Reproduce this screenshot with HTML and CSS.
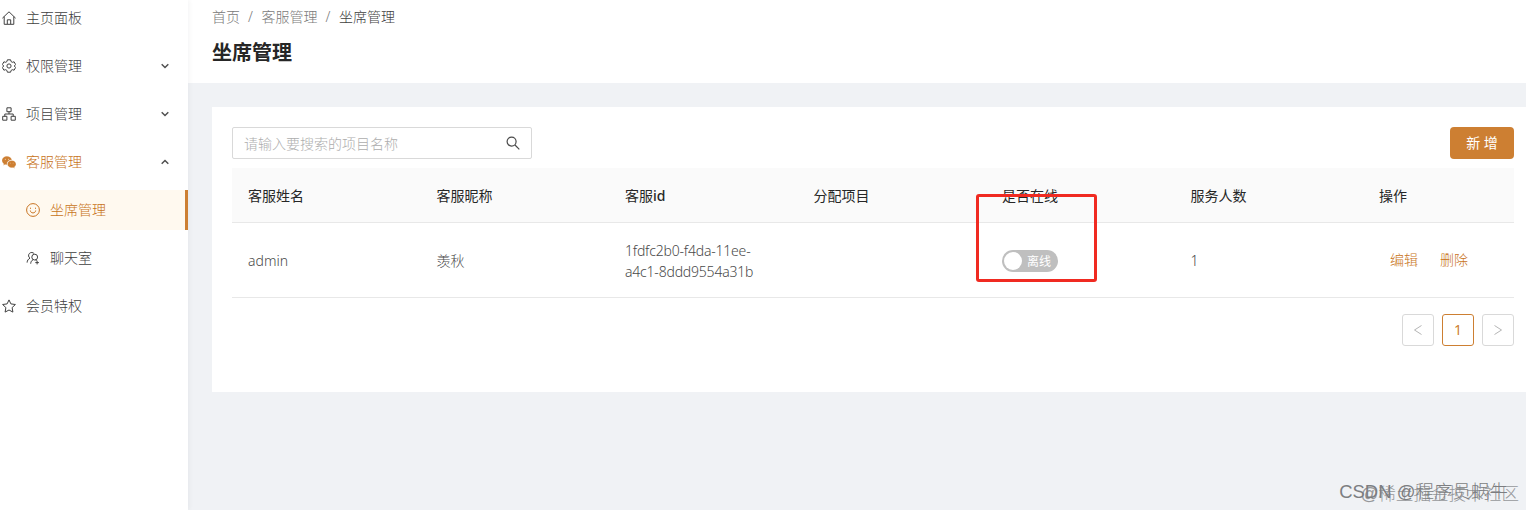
FILE: index.html
```html
<!DOCTYPE html>
<html lang="zh-CN">
<head>
    <meta charset="UTF-8">
    <meta name="viewport" content="width=device-width, initial-scale=1.0">
    <title>坐席管理</title>
    <link rel="stylesheet" href="styles.css">
</head>
<body>
    <div class="layout">
        <aside class="sidebar">
            <ul class="menu">
                <li class="menu-item">
                    <svg class="icon" viewBox="0 0 14 14"><path d="M.4 7.200 7 .8l6.600 6.400M2.200 5.600v7.700h9.600V5.600M5.300 13V8.800h3.400V13"/></svg>
                    <span>主页面板</span>
                </li>
                <li class="menu-item">
                    <svg class="icon" viewBox="0 0 14 14"><path d="M5.400.8h3.200l.5 1.800 1.200.7 1.800-.5 1.500 2.700L12.300 7l1.300 1.500-1.500 2.700-1.800-.5-1.200.7-.5 1.800H5.400l-.5-1.800-1.200-.7-1.800.5L.4 8.500 1.700 7 .4 5.500l1.500-2.700 1.800.5 1.200-.7z"/><circle cx="7" cy="7" r="2.100"/></svg>
                    <span>权限管理</span>
                    <svg class="arrow" viewBox="0 0 10 10"><path d="M1.700 3.200 5 6.500l3.300-3.300"/></svg>
                </li>
                <li class="menu-item">
                    <svg class="icon" viewBox="0 0 14 14"><path d="M4.900.8h4.200v3.900H4.900zM.7 9.300h4.200v3.900H.7zM9.100 9.300h4.200v3.900H9.100zM7 4.700V7M2.800 9.300V7h8.400v2.300"/></svg>
                    <span>项目管理</span>
                    <svg class="arrow" viewBox="0 0 10 10"><path d="M1.700 3.200 5 6.500l3.300-3.300"/></svg>
                </li>
                <li class="menu-item open">
                    <svg class="icon solid" viewBox="0 0 14 14">
                        <path d="M5 1.200C2.200 1.200 0 3.100 0 5.500c0 1.400.7 2.500 1.800 3.300l-.4 1.600L3 9.500c.7.200 1.300.3 2 .3C4.600 6.800 6.900 5 9.900 5 9.400 2.800 7.400 1.200 5 1.200z"/>
                        <path d="M9.700 5.400c-2.400 0-4.300 1.600-4.300 3.600s1.900 3.700 4.300 3.700c.5 0 1-.1 1.500-.2l1.500.9-.4-1.400c1-.7 1.700-1.800 1.700-3 0-2-1.900-3.600-4.300-3.600z"/>
                        <g class="eyes"><circle cx="3.300" cy="4.200" r=".5"/><circle cx="6.600" cy="4.200" r=".5"/><circle cx="8.300" cy="8.100" r=".4"/><circle cx="11.100" cy="8.100" r=".4"/></g>
                    </svg>
                    <span>客服管理</span>
                    <svg class="arrow" viewBox="0 0 10 10"><path d="M1.700 6.800 5 3.500l3.300 3.300"/></svg>
                </li>
                <li class="menu-item sub selected">
                    <svg class="icon" viewBox="0 0 14 14"><circle cx="7" cy="7" r="6.400"/><path d="M4.300 7.500c.3 3.200 5.100 3.200 5.400 0"/><path d="M4.500 4.700v1.100M9.500 4.700v1.100"/></svg>
                    <span>坐席管理</span>
                </li>
                <li class="menu-item sub">
                    <svg class="icon" viewBox="0 0 14 14"><path d="M8.200 2.800A3.100 3.100 0 1 0 4 7.200C2.300 8 1.200 9.500 1.100 11.600M4.700 12.700c.1-2.100 1-3.300 2.500-4"/><circle cx="8.700" cy="6.100" r="2.900"/><path d="M9.400 9c.8.100 1.200.3 1.700.6M11.100 9.800v3.600M9.300 11.600h3.600"/></svg>
                    <span>聊天室</span>
                </li>
                <li class="menu-item">
                    <svg class="icon" viewBox="0 0 14 14"><path d="m7 .9 1.900 4 4.500.6-3.300 3.100.8 4.500L7 11l-3.900 2.100.8-4.500L.6 5.500l4.500-.6z"/></svg>
                    <span>会员特权</span>
                </li>
            </ul>
        </aside>

        <main class="main">
            <header class="page-header">
                <nav class="breadcrumb">
                    <span>首页</span>
                    <span class="separator">/</span>
                    <span>客服管理</span>
                    <span class="separator">/</span>
                    <span class="current">坐席管理</span>
                </nav>
                <h1>坐席管理</h1>
            </header>

            <section class="card">
                <div class="toolbar">
                    <div class="search">
                        <span class="placeholder">请输入要搜索的项目名称</span>
                        <svg class="icon" viewBox="0 0 14 14"><circle cx="5.600" cy="5.600" r="4.500"/><path d="m9 9 4.300 4.300"/></svg>
                    </div>
                    <button class="add-btn">新 增</button>
                </div>

                <table class="table">
                    <thead>
                        <tr>
                            <th>客服姓名</th>
                            <th>客服昵称</th>
                            <th>客服<span class="latin">id</span></th>
                            <th>分配项目</th>
                            <th>是否在线</th>
                            <th>服务人数</th>
                            <th class="action-col">操作</th>
                        </tr>
                    </thead>
                    <tbody>
                        <tr>
                            <td>admin</td>
                            <td>羡秋</td>
                            <td class="uid">1fdfc2b0-f4da-11ee-<br>a4c1-8ddd9554a31b</td>
                            <td></td>
                            <td>
                                <div class="switch-cell">
                                    <span class="switch"><i class="handle"></i><span>离线</span></span>
                                    <div class="highlight"></div>
                                </div>
                            </td>
                            <td>1</td>
                            <td><div class="actions"><a>编辑</a><a>删除</a></div></td>
                        </tr>
                    </tbody>
                </table>

                <div class="pagination">
                    <span class="page"><svg viewBox="0 0 12 12"><path d="M9.500 1.500 2.500 6l7 4.500"/></svg></span>
                    <span class="page active">1</span>
                    <span class="page"><svg viewBox="0 0 12 12"><path d="m2.500 1.500 7 4.500-7 4.500"/></svg></span>
                </div>
            </section>
        </main>
    </div>

    <div class="watermark community">@稀土掘金技术社区</div>
    <div class="watermark author">CSDN @程序员蜗牛</div>
</body>
</html>
```

FILE: styles.css
```css
* {
    box-sizing: border-box;
}

body {
    margin: 0;
    font-family: "Noto Sans", "Noto Sans CJK SC", sans-serif;
    font-size: 14px;
    font-weight: 300;
    line-height: 21px;
    color: #4a4a4a;
    background: #f0f2f5;
    overflow: hidden;
}

svg {
    fill: none;
    stroke: currentColor;
}

.layout {
    display: flex;
    height: 510px;
}

/* sidebar */
.sidebar {
    flex: none;
    width: 188px;
    background: #fff;
    box-shadow: 1px 0 5px rgba(0, 21, 41, 0.05);
    z-index: 1;
}

.menu {
    list-style: none;
    margin: 0;
    padding: 0;
}

.menu-item {
    display: flex;
    align-items: center;
    height: 40px;
    margin-bottom: 8px;
    padding: 0 18px 0 2px;
    color: #404040;
}

.menu-item:first-child {
    height: 36px;
    margin-bottom: 10px;
}

.menu-item span {
    padding-bottom: 2px;
}

.icon {
    flex: none;
    width: 14px;
    height: 14px;
    margin-right: 10px;
}

.arrow {
    width: 10px;
    height: 10px;
    margin-left: auto;
    stroke: #505050;
    stroke-width: 1.5;
}

.menu-item.open {
    color: #c87320;
}

.icon.solid {
    fill: #cd7f32;
    stroke: #fff;
    stroke-width: 0.2;
}

.eyes {
    fill: #f5dfc9;
    stroke: none;
}

.menu-item.sub {
    padding-left: 26px;
}

.menu-item.selected {
    color: #c87320;
    background: #fff9ef;
    border-right: 3px solid #cd7f32;
}

/* content */
.main {
    flex: 1;
    min-width: 0;
}

.page-header {
    height: 83px;
    padding: 6px 24px 0;
    background: #fff;
}

.breadcrumb {
    display: flex;
    gap: 8px;
    color: #7a7a7a;
}

.breadcrumb .separator {
    width: 5.5px;
}

.breadcrumb .current {
    color: #404040;
}

.page-header h1 {
    margin: 11px 0 0;
    font-size: 20px;
    font-weight: 700;
    line-height: 30px;
    color: #262626;
}

.card {
    height: 285px;
    margin: 24px 0 0 24px;
    padding: 20px 12px 0 20px;
    background: #fff;
}

.toolbar {
    display: flex;
    justify-content: space-between;
    height: 32px;
}

.search {
    display: flex;
    align-items: center;
    justify-content: space-between;
    width: 300px;
    padding: 0 1px 0 11px;
    border: 1px solid #d9d9d9;
    border-radius: 2px;
}

.search .icon {
    stroke-width: 1.2;
}

.placeholder {
    color: #adadad;
}

.add-btn {
    width: 64px;
    height: 32px;
    padding: 0 0 2px;
    border: none;
    border-radius: 4px;
    background: #cd7f32;
    color: #fff;
    font-family: inherit;
    font-size: 14px;
    font-weight: 400;
}

.table {
    width: 100%;
    margin-top: 9px;
    border-collapse: collapse;
    table-layout: fixed;
}

.table th,
.table td {
    padding: 0 16px;
    text-align: left;
    border-bottom: 1px solid #e8e8e8;
}

.table th {
    width: 188.5px;
    height: 54px;
    padding-top: 1px;
    font-weight: 400;
    color: #262626;
    background: #fafafa;
}

.table th .latin {
    font-weight: 500;
}

.table th.action-col {
    width: auto;
}

.table td {
    height: 75px;
    padding-top: 1px;
}

.table td.uid {
    padding-top: 2px;
    letter-spacing: -0.2px;
}

.switch-cell {
    position: relative;
    height: 22px;
    top: 1px;
}

.switch {
    display: flex;
    align-items: center;
    gap: 5px;
    width: 56px;
    height: 22px;
    padding-left: 2px;
    border-radius: 11px;
    background: #bfbfbf;
    color: #fff;
    font-size: 12px;
    font-weight: 400;
}

.handle {
    width: 18px;
    height: 18px;
    border-radius: 50%;
    background: #fff;
}

/* red frame laid over the switch */
.highlight {
    position: absolute;
    left: -26px;
    top: -56px;
    width: 121px;
    height: 88px;
    border: 3px solid #f02a21;
    border-radius: 3px;
}

.actions {
    display: flex;
    gap: 22px;
    padding: 0 0 2px 11px;
    white-space: nowrap;
    color: #c87320;
}

.pagination {
    display: flex;
    justify-content: flex-end;
    gap: 8px;
    margin-top: 16px;
}

.page {
    display: flex;
    align-items: center;
    justify-content: center;
    width: 32px;
    height: 32px;
    border: 1px solid #d9d9d9;
    border-radius: 3px;
    color: #b5b5b5;
}

.page svg {
    width: 12px;
    height: 12px;
}

.page.active {
    border-color: #cd7f32;
    color: #cd7f32;
    font-weight: 400;
}

/* watermarks */
.watermark {
    position: absolute;
    white-space: nowrap;
    line-height: 26px;
    font-family: "Liberation Sans", "Noto Sans CJK SC", sans-serif;
}

.watermark.community {
    right: 7px;
    bottom: 3px;
    font-size: 17.6px;
    color: #96989b;
}

.watermark.author {
    right: 18px;
    bottom: 5px;
    font-size: 18.5px;
    color: #7c7e81;
}
```
